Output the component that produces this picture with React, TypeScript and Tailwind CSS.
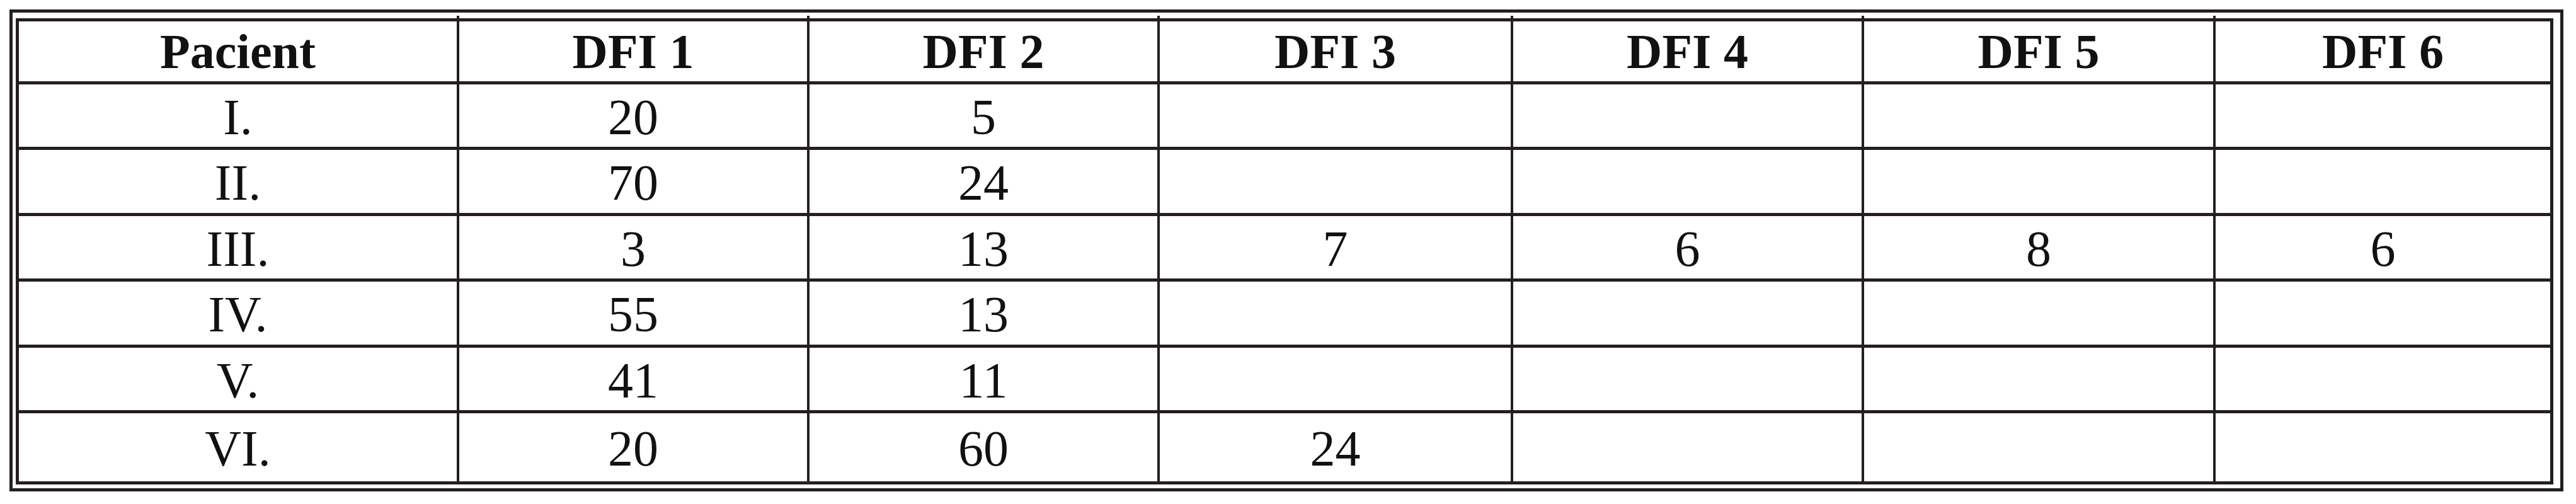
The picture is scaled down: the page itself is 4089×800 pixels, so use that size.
const headers = ["Pacient", "DFI 1", "DFI 2", "DFI 3", "DFI 4", "DFI 5", "DFI 6"];

const rows: { label: string; values: string[]; h: string }[] = [
  { label: "I.", values: ["20", "5", "", "", "", ""], h: "h-[104px]" },
  { label: "II.", values: ["70", "24", "", "", "", ""], h: "h-[105px]" },
  { label: "III.", values: ["3", "13", "7", "6", "8", "6"], h: "h-[104px]" },
  { label: "IV.", values: ["55", "13", "", "", "", ""], h: "h-[105px]" },
  { label: "V.", values: ["41", "11", "", "", "", ""], h: "h-[104px]" },
  { label: "VI.", values: ["20", "60", "24", "", "", ""], h: "h-[113px]" },
];

const cols = "grid grid-cols-[695px_556px_556px_561px_557px_558px_535px]";

export default function App() {
  return (
    <div className="h-[800px] w-[4089px] bg-white pl-[15px] pt-[15px] text-[#111] [font-family:'Liberation_Serif','Times_New_Roman',serif]">
      <div className="h-[765px] w-[4054px] border-[5px] border-[#231f20] pb-[6px] pl-[5px] pr-[11px] pt-[5px]">
        {/* little ticks where the column rules run past the top edge */}
        <div className={`${cols} h-[4px] px-[5px]`}>
          {headers.map((h, i) => (
            <div key={h} className={i > 0 ? "border-l-4 border-[#231f20]" : ""} />
          ))}
        </div>
        <div className="border-[5px] border-[#231f20]">
          <div className={`${cols} h-[95px]`}>
            {headers.map((h, i) => (
              <div
                key={h}
                className={`flex items-center justify-center text-[78px] font-bold leading-none ${i > 0 ? "border-l-4 border-[#231f20]" : ""}`}
              >
                {h}
              </div>
            ))}
          </div>
          {rows.map((r) => (
            <div key={r.label} className={`${cols} ${r.h} border-t-[5px] border-[#231f20]`}>
              <div className="flex items-center justify-center pt-[4px] text-[80px] leading-none">{r.label}</div>
              {r.values.map((v, i) => (
                <div
                  key={i}
                  className="flex items-center justify-center border-l-4 border-[#231f20] pt-[4px] text-[80px] leading-none"
                >
                  {v}
                </div>
              ))}
            </div>
          ))}
        </div>
      </div>
    </div>
  );
}
